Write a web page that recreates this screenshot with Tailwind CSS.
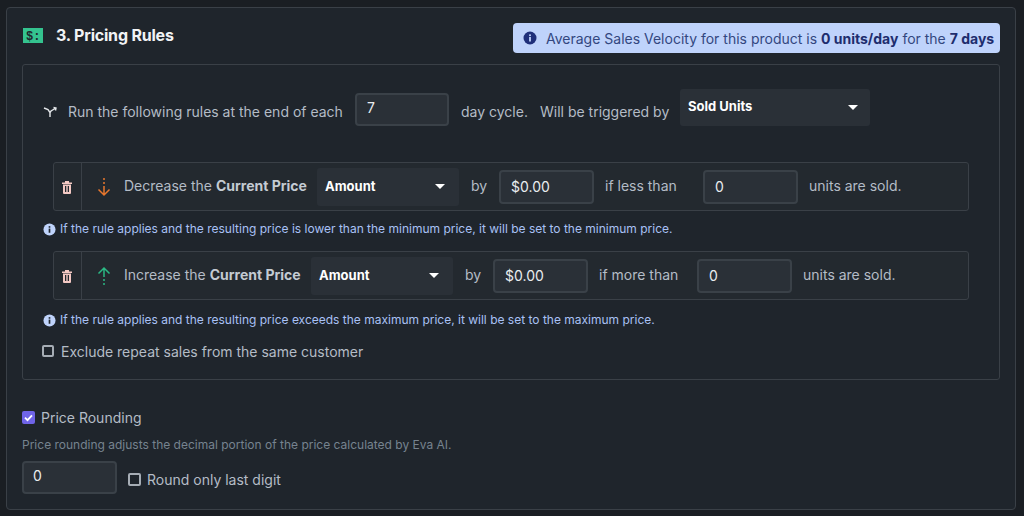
<!DOCTYPE html>
<html lang="en">
<head>
    <meta charset="UTF-8">
    <title>Pricing Rules</title>
    <script src="https://cdn.jsdelivr.net/npm/@tailwindcss/browser@4"></script>
</head>
<body class="bg-[#1a1e23] font-['Inter',sans-serif] overflow-hidden">

<div class="w-[1024px] h-[516px] pt-[7px] pl-[6px]">
    <!-- Card -->
    <div class="w-[1010px] h-[503px] bg-[#1f252c] border border-[#3a4047] rounded-[4px] pl-[15px] pr-[15px]">

        <!-- Header -->
        <div class="flex items-start justify-between h-[56px] pt-[15px]">
            <div class="flex items-center h-[24px] ml-[1px]">
                <svg class="w-[20px] h-[15px]" viewBox="0 0 20 15"><rect width="20" height="15" fill="#34c38f"/><text x="3" y="12" font-size="12" font-weight="700" fill="#1f252c" font-family="Liberation Mono">$:</text></svg>
                <h2 class="ml-[13px] text-[16px] font-bold text-[#f1f3f5] tracking-[-0.2px]">3. Pricing Rules</h2>
            </div>
            <div class="flex items-center w-[487px] h-[30px] bg-[#bfd3fb] rounded-[4px] pl-[10px] text-[14px] text-[#33477f]">
                <svg class="w-[14px] h-[14px] mr-[9px]" viewBox="0 0 14 14"><circle cx="7" cy="7" r="6.5" fill="#1f2f7a"/><rect x="6.1" y="6" width="1.8" height="4.5" fill="#bfd3fb"/><rect x="6.1" y="3.4" width="1.8" height="1.7" fill="#bfd3fb"/></svg>
                <span class="whitespace-nowrap">Average Sales Velocity for this product is <b class="text-[#1e2d6e]">0 units/day</b> for the <b class="text-[#1e2d6e]">7 days</b></span>
            </div>
        </div>

        <!-- Rules box -->
        <div class="w-[978px] h-[316px] border border-[#3a4047] rounded-[3px] text-[14px] text-[#b4bcc6]">

            <!-- Cycle row -->
            <div class="flex items-center h-[38px] mt-[23px] pl-[19px]">
                <svg class="w-[16px] h-[14px] mt-[9px]" viewBox="0 0 16 14" fill="none" stroke="#e4e7ea" stroke-width="1.4"><path d="M2 3l4 1.500 2 3V12M14 3l-5 3-1 1.500M11.500 2.500L14 3l-.5 2.500"/></svg>
                <span class="ml-[10px] w-[287px] mt-[8px] whitespace-nowrap">Run the following rules at the end of each</span>
                <div class="w-[94px] h-[33px] mt-[4px] bg-[#2a3037] border-2 border-[#3a4148] rounded-[4px] pl-[10px] leading-[26px] text-[#e9ecef]">7</div>
                <span class="ml-[12px] w-[79px] mt-[8px] whitespace-nowrap">day cycle.</span>
                <span class="w-[140px] mt-[8px] whitespace-nowrap">Will be triggered by</span>
                <div class="flex items-center justify-between w-[190px] h-[37px] bg-[#2a3037] rounded-[3px] pl-[8px] pr-[12px] text-[13px] font-bold text-white">
                    <span class="-mt-[1px]">Sold Units</span>
                    <span class="border-x-[5px] border-x-transparent border-t-[5px] border-t-white"></span>
                </div>
            </div>

            <!-- Decrease rule -->
            <div class="flex items-center w-[916px] h-[49px] mt-[36px] ml-[30px] bg-[#23292f] border border-[#3a4047] rounded-[3px]">
                <div class="flex items-center justify-center w-[28px] h-full border-r border-[#3a4047] pr-[1px]">
                    <svg class="w-[12px] h-[14px]" viewBox="0 0 12 14" fill="#f4c9c4"><path d="M1 2.500h10v1.500H1zM4 1h4v1.500H4zM2 4.500h8V13a1 1 0 0 1-1 1H3a1 1 0 0 1-1-1zM4 6v6h1.300V6zM6.700 6v6H8V6z" fill-rule="evenodd"/></svg>
                </div>
                <svg class="w-[14px] h-[20px] ml-[15px]" viewBox="0 0 14 20" fill="none" stroke="#e8772e" stroke-width="1.500"><path d="M7 1v2M7 5v2M7 9v9M1.500 12.500L7 18l5.500-5.500"/></svg>
                <span class="ml-[13px] w-[193px] -mt-[2px] whitespace-nowrap">Decrease the <b class="text-[#c4cbd3]">Current Price</b></span>
                <div class="flex items-center justify-between w-[142px] h-[38px] bg-[#2a3037] rounded-[3px] pl-[8px] pr-[14px] text-[13px] font-bold text-white">
                    <span>Amount</span>
                    <span class="border-x-[5px] border-x-transparent border-t-[5px] border-t-white"></span>
                </div>
                <span class="ml-[12px] w-[28px] -mt-[2px]">by</span>
                <div class="w-[95px] h-[34px] bg-[#2a3037] border-2 border-[#3a4148] rounded-[4px] pl-[10px] leading-[30px] text-[#e9ecef]">$0.00</div>
                <span class="ml-[11px] w-[98px] -mt-[2px] whitespace-nowrap">if less than</span>
                <div class="w-[95px] h-[34px] bg-[#2a3037] border-2 border-[#3a4148] rounded-[4px] pl-[10px] leading-[30px] text-[#e9ecef]">0</div>
                <span class="ml-[11px] -mt-[2px] whitespace-nowrap">units are sold.</span>
            </div>

            <!-- Decrease note -->
            <div class="flex items-center h-[40px] pb-[4px] pl-[20px] text-[12px] text-[#a9c1f5]">
                <svg class="w-[13px] h-[13px] mr-[4px]" viewBox="0 0 14 14"><circle cx="7" cy="7" r="6.500" fill="#bfd3fb"/><rect x="6.100" y="6" width="1.800" height="4.500" fill="#1f252c"/><rect x="6.100" y="3.400" width="1.800" height="1.700" fill="#1f252c"/></svg>
                <span class="whitespace-nowrap">If the rule applies and the resulting price is lower than the minimum price, it will be set to the minimum price.</span>
            </div>

            <!-- Increase rule -->
            <div class="flex items-center w-[916px] h-[49px] ml-[30px] bg-[#23292f] border border-[#3a4047] rounded-[3px]">
                <div class="flex items-center justify-center w-[28px] h-full border-r border-[#3a4047] pr-[1px]">
                    <svg class="w-[12px] h-[14px]" viewBox="0 0 12 14" fill="#f4c9c4"><path d="M1 2.500h10v1.500H1zM4 1h4v1.500H4zM2 4.500h8V13a1 1 0 0 1-1 1H3a1 1 0 0 1-1-1zM4 6v6h1.300V6zM6.700 6v6H8V6z" fill-rule="evenodd"/></svg>
                </div>
                <svg class="w-[14px] h-[20px] ml-[15px]" viewBox="0 0 14 20" fill="none" stroke="#2bb884" stroke-width="1.500"><path d="M7 19v-2M7 15v-2M7 11V2M1.500 7.500L7 2l5.500 5.500"/></svg>
                <span class="ml-[13px] w-[187px] -mt-[2px] whitespace-nowrap">Increase the <b class="text-[#c4cbd3]">Current Price</b></span>
                <div class="flex items-center justify-between w-[142px] h-[38px] bg-[#2a3037] rounded-[3px] pl-[8px] pr-[14px] text-[13px] font-bold text-white">
                    <span>Amount</span>
                    <span class="border-x-[5px] border-x-transparent border-t-[5px] border-t-white"></span>
                </div>
                <span class="ml-[12px] w-[28px] -mt-[2px]">by</span>
                <div class="w-[95px] h-[34px] bg-[#2a3037] border-2 border-[#3a4148] rounded-[4px] pl-[10px] leading-[30px] text-[#e9ecef]">$0.00</div>
                <span class="ml-[11px] w-[98px] -mt-[2px] whitespace-nowrap">if more than</span>
                <div class="w-[95px] h-[34px] bg-[#2a3037] border-2 border-[#3a4148] rounded-[4px] pl-[10px] leading-[30px] text-[#e9ecef]">0</div>
                <span class="ml-[11px] -mt-[2px] whitespace-nowrap">units are sold.</span>
            </div>

            <!-- Increase note -->
            <div class="flex items-center h-[40px] pl-[20px] text-[12px] text-[#a9c1f5]">
                <svg class="w-[13px] h-[13px] mr-[4px]" viewBox="0 0 14 14"><circle cx="7" cy="7" r="6.500" fill="#bfd3fb"/><rect x="6.100" y="6" width="1.800" height="4.500" fill="#1f252c"/><rect x="6.100" y="3.400" width="1.800" height="1.700" fill="#1f252c"/></svg>
                <span class="whitespace-nowrap">If the rule applies and the resulting price exceeds the maximum price, it will be set to the maximum price.</span>
            </div>

            <label class="flex items-center h-[20px] mt-[1px] pl-[19px]">
                <span class="w-[12px] h-[12px] border-2 border-[#a6adb5] rounded-[2px]"></span>
                <span class="ml-[7px] whitespace-nowrap">Exclude repeat sales from the same customer</span>
            </label>
        </div>

        <!-- Price rounding -->
        <label class="flex items-center h-[20px] mt-[27px] text-[14px] text-[#b4bcc6]">
            <svg class="w-[13px] h-[13px]" viewBox="0 0 13 13"><rect width="13" height="13" rx="2" fill="#6f64e8"/><path d="M3 6.700l2.500 2.500L10 4.300" fill="none" stroke="#fff" stroke-width="1.800"/></svg>
            <span class="ml-[6px]">Price Rounding</span>
        </label>
        <p class="mt-[10px] text-[12px] leading-[16px] text-[#76838f]">Price rounding adjusts the decimal portion of the price calculated by Eva AI.</p>
        <div class="flex items-center mt-[8px] text-[14px] text-[#b4bcc6]">
            <div class="w-[95px] h-[33px] bg-[#2a3037] border-2 border-[#3a4148] rounded-[4px] pl-[9px] leading-[25px] text-[#e9ecef]">0</div>
            <span class="ml-[11px] mt-[3px] w-[13px] h-[13px] border-2 border-[#a6adb5] rounded-[2px]"></span>
            <span class="ml-[6px] mt-[3px]">Round only last digit</span>
        </div>
    </div>
</div>

</body>
</html>
